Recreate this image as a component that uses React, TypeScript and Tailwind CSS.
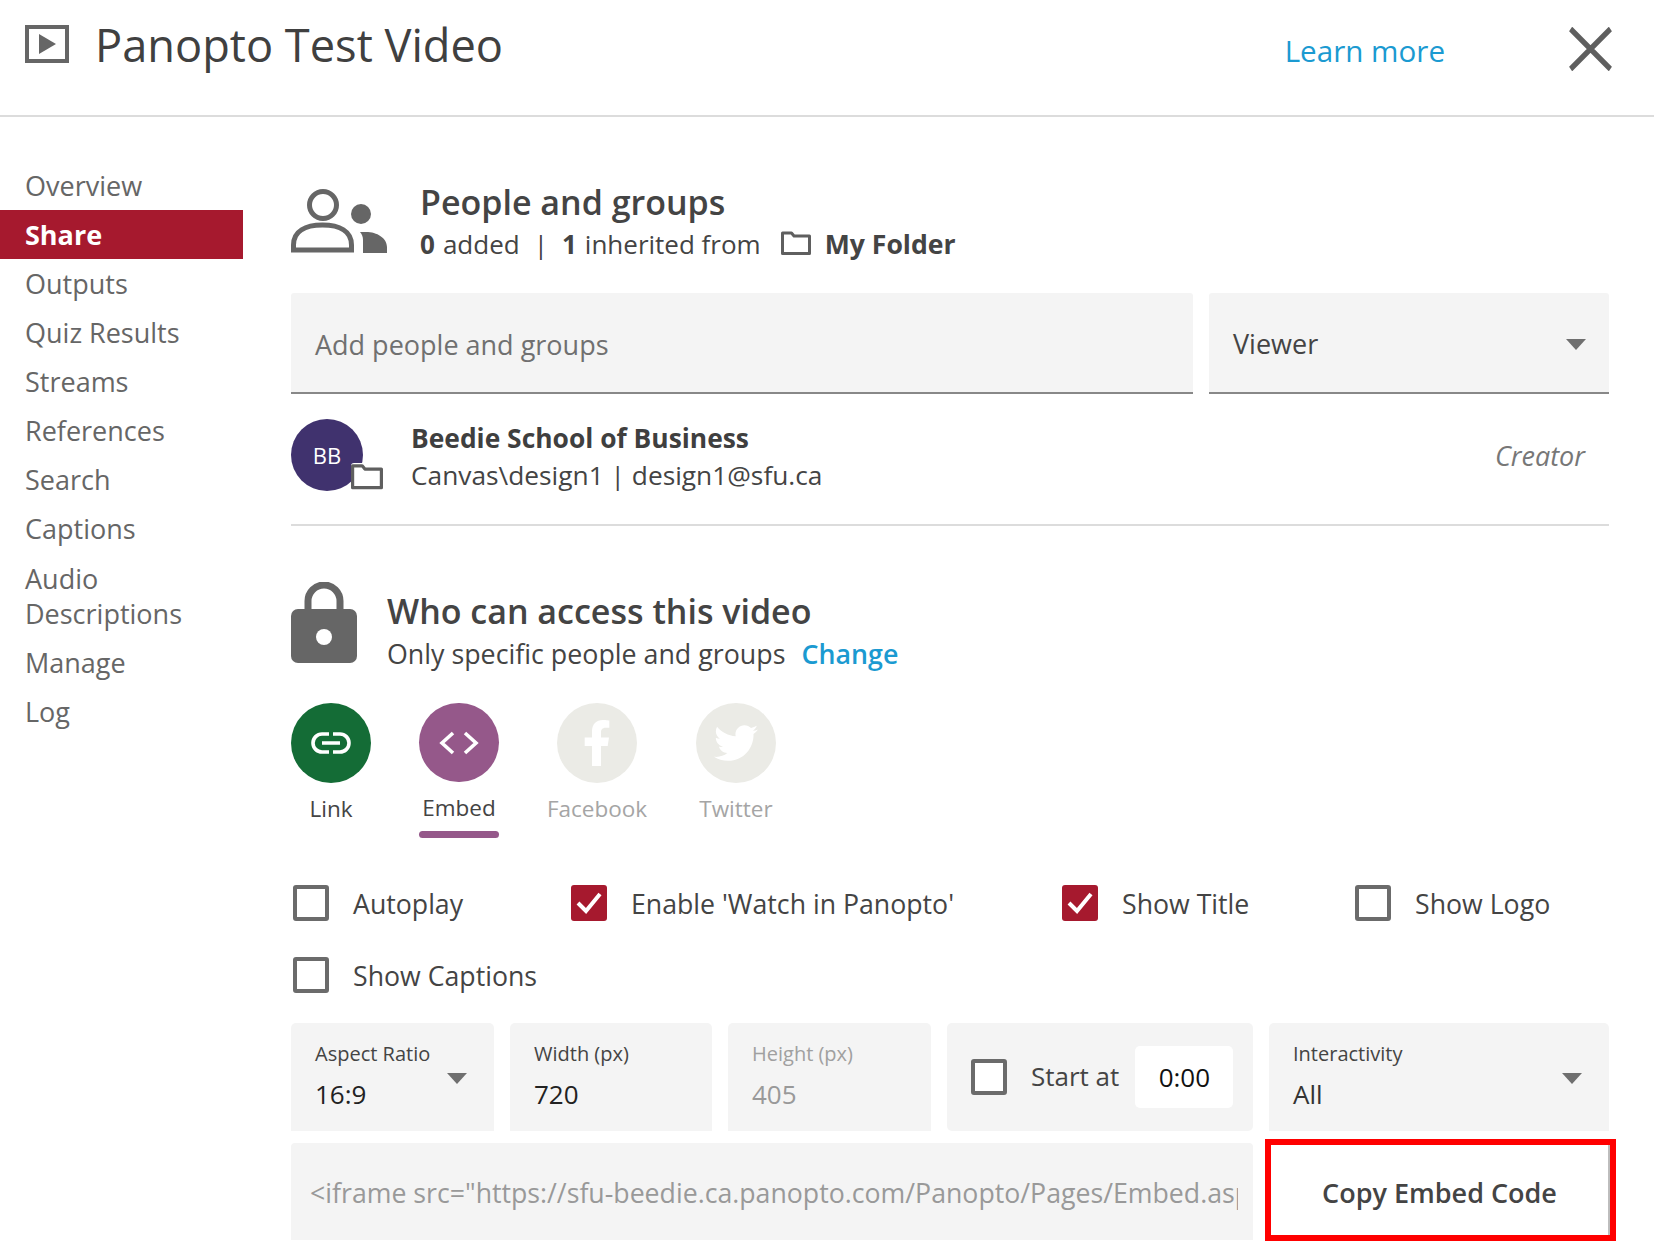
import React from 'react'
import { FaFacebookF, FaTwitter } from 'react-icons/fa'

const navItems = ['Overview', 'Share', 'Outputs', 'Quiz Results', 'Streams', 'References', 'Search', 'Captions']

function FolderIcon({ className }: { className?: string }) {
  return (
    <svg viewBox="0 0 30 24" className={className} fill="none" stroke="#5f5f5f" strokeWidth="3" strokeLinejoin="round">
      <path d="M1.5 22.5V2h9l2.5 3h15.5v17.5z" />
    </svg>
  )
}

function Caret({ className }: { className?: string }) {
  return <div className={`w-0 h-0 border-l-[10px] border-r-[10px] border-t-[11px] border-l-transparent border-r-transparent border-t-[#6f6f6f] ${className ?? ''}`} />
}

function Check({ checked }: { checked?: boolean }) {
  if (checked) {
    return (
      <div className="w-9 h-9 rounded-[3px] bg-[#a6192e] flex items-center justify-center shrink-0">
        <svg viewBox="0 0 36 36" className="w-9 h-9" fill="none" stroke="#fff" strokeWidth="4">
          <path d="M7 18l8 8L29 9" />
        </svg>
      </div>
    )
  }
  return <div className="w-9 h-9 rounded-[3px] border-[4px] border-[#6b6b6b] bg-white shrink-0" />
}

function ShareButton({ label, bg, disabled, active, children, className }: { label: string; bg: string; disabled?: boolean; active?: boolean; children: React.ReactNode; className?: string }) {
  return (
    <div className={`w-[80px] flex flex-col items-center shrink-0 ${className ?? ''}`}>
      <div className={`w-[80px] h-[80px] rounded-full flex items-center justify-center ${bg}`}>{children}</div>
      <div className={`mt-[10px] h-[32px] leading-[32px] text-[22.5px] whitespace-nowrap ${disabled ? 'text-[#a5a5a5]' : 'text-[#444]'}`}>{label}</div>
      {active && <div className="mt-[7px] w-[80px] h-[7px] rounded-full bg-[#95588a]" />}
    </div>
  )
}

function CheckOption({ label, checked, className }: { label: string; checked?: boolean; className?: string }) {
  return (
    <div className={`flex items-center gap-[24px] shrink-0 ${className ?? ''}`}>
      <Check checked={checked} />
      <span className="pt-[2px] text-[26.7px] text-[#444] whitespace-nowrap">{label}</span>
    </div>
  )
}

export default function App() {
  return (
    <div className="w-[1654px] h-[1246px] bg-white overflow-hidden text-[#3f3f3f]" style={{ fontFamily: '"Open Sans", "Noto Sans", sans-serif' }}>
      {/* header */}
      <div className="h-[117px] border-b-2 border-[#dcdcdc] flex items-start pl-[25px] pr-[42px]">
        <div className="mt-[25px] w-[44px] h-[38px] border-[4px] border-[#666] flex items-center justify-center shrink-0">
          <div className="w-0 h-0 border-t-[10px] border-b-[10px] border-l-[17px] border-t-transparent border-b-transparent border-l-[#666]" />
        </div>
        <div className="ml-[26px] mt-[11px] text-[45.2px] leading-[68px] text-[#404040]">Panopto Test Video</div>
        <div className="ml-auto mt-[31px] text-[29.6px] leading-[40px] text-[#1b9ad1]">Learn more</div>
        <svg viewBox="0 0 53 44" className="ml-[124px] mt-[27px] w-[43px] h-[44px]" fill="none" stroke="#5f5f5f" strokeWidth="6" preserveAspectRatio="none">
          <path d="M2 2l49 40M51 2L2 42" />
        </svg>
      </div>

      <div className="flex">
        {/* sidebar */}
        <div className="w-[243px] pt-[44px] shrink-0 text-[27px] text-[#666]">
          {navItems.map((item) => (
            <div key={item} className={`h-[49px] leading-[49px] pl-[25px] ${item === 'Share' ? 'bg-[#a6192e] text-white font-bold' : ''}`}>{item}</div>
          ))}
          <div className="pl-[25px] leading-[35px] pt-[8px] pb-[7px]">Audio<br />Descriptions</div>
          <div className="h-[49px] leading-[49px] pl-[25px]">Manage</div>
          <div className="h-[49px] leading-[49px] pl-[25px]">Log</div>
        </div>

        {/* main */}
        <div className="ml-[48px] w-[1318px] pt-[66px]">
          <div className="h-[80px] flex">
            <svg viewBox="0 0 96 65" className="w-[96px] h-[65px] mt-[5px] shrink-0">
              <circle cx="32" cy="17" r="13.5" fill="none" stroke="#666" strokeWidth="5" />
              <path d="M2.5 62V57c0-14 12-20 29-20s29 6 29 20v5z" fill="none" stroke="#666" strokeWidth="5" />
              <circle cx="70" cy="26" r="10" fill="#666" />
              <path d="M69 44h6c11 0 21 6 21 15v6H72V52c0-3-1-6-3-8z" fill="#666" />
            </svg>
            <div className="ml-[33px]">
              <div className="h-[40px] leading-[38px] text-[34px] font-semibold text-[#444]">People and groups</div>
              <div className="mt-[1px] h-[40px] leading-[40px] text-[26px] flex items-center whitespace-nowrap text-[#444]">
                <b className="font-bold">0</b>
                <span className="ml-[8px]">added</span>
                <span className="ml-[14px]">|</span>
                <b className="ml-[14px] font-bold">1</b>
                <span className="ml-[8px]">inherited from</span>
                <FolderIcon className="ml-[20px] w-[30px] h-[24px] -mt-[3px]" />
                <b className="ml-[14px] text-[26.6px] font-bold">My Folder</b>
              </div>
            </div>
          </div>

          <div className="mt-[30px] h-[101px] flex gap-4">
            <div className="w-[902px] bg-[#f4f4f4] border-b-2 border-[#888] rounded-t-[3px] flex items-center pl-6 pt-[6px] text-[27px] text-[#707070]">Add people and groups</div>
            <div className="w-[400px] bg-[#f4f4f4] border-b-2 border-[#888] rounded-t-[3px] flex items-center justify-between pl-6 pr-[23px] pt-[4px] text-[27px] text-[#444]">
              Viewer
              <Caret />
            </div>
          </div>

          <div className="mt-[25px] h-[72px] flex items-center">
            <div className="relative w-[72px] h-[72px] rounded-full bg-[#40326e] text-white flex items-center justify-center text-[22px] shrink-0">
              BB
              <div className="absolute left-[60px] top-[44px] w-[32px] h-[27px] bg-white rounded-[3px]">
                <FolderIcon className="w-[32px] h-[27px]" />
              </div>
            </div>
            <div className="ml-[48px] pt-[4px]">
              <div className="h-[36px] leading-[36px] text-[26.4px] font-bold text-[#3f3f3f]">Beedie School of Business</div>
              <div className="h-[38px] leading-[38px] text-[26.3px] text-[#444]">Canvas\design1 | design1@sfu.ca</div>
            </div>
            <div className="ml-auto mr-6 pt-[3px] text-[27px] italic text-[#777]">Creator</div>
          </div>

          <div className="mt-[33px] h-[2px] bg-[#dcdcdc]" />

          <div className="mt-[56px] h-[81px] flex">
            <svg viewBox="0 0 66 81" className="w-[66px] h-[81px] shrink-0">
              <path d="M17 30V19a16 16 0 0132 0v11" fill="none" stroke="#666" strokeWidth="7" />
              <rect x="0" y="27" width="66" height="54" rx="7" fill="#666" />
              <circle cx="33" cy="55" r="8" fill="#fff" />
            </svg>
            <div className="ml-[30px]">
              <div className="h-[44px] mt-[7px] leading-[44px] text-[34px] font-semibold text-[#444]">Who can access this video</div>
              <div className="h-[40px] pt-[1px] leading-[40px] text-[26.8px] text-[#444] whitespace-nowrap">
                Only specific people and groups<span className="ml-[16px] font-semibold text-[#1b9ad1]">Change</span>
              </div>
            </div>
          </div>

          <div className="mt-[40px] h-[135px] flex">
            <ShareButton label="Link" bg="bg-[#146c36]">
              <svg viewBox="0 0 40 22" className="w-[40px] h-[22px]" fill="none" stroke="#fff" strokeWidth="3.6">
                <path d="M18 2H11a9 9 0 000 18h7M22 2h7a9 9 0 010 18h-7M11 11h18" />
              </svg>
            </ShareButton>
            <ShareButton label="Embed" bg="bg-[#95588a]" active className="ml-[48px]">
              <svg viewBox="0 0 40 24" className="w-[40px] h-[24px]" fill="none" stroke="#fff" strokeWidth="3.6">
                <path d="M14 2L3 12l11 10M26 2l11 10-11 10" />
              </svg>
            </ShareButton>
            <ShareButton label="Facebook" bg="bg-[#ebebe6]" disabled className="ml-[58px]">
              <FaFacebookF className="text-white text-[46px]" />
            </ShareButton>
            <ShareButton label="Twitter" bg="bg-[#ebebe6]" disabled className="ml-[59px]">
              <FaTwitter className="text-white text-[44px]" />
            </ShareButton>
          </div>

          <div className="mt-[47px] h-[36px] flex">
            <CheckOption label="Autoplay" className="ml-[2px] w-[278px]" />
            <CheckOption label="Enable 'Watch in Panopto'" checked className="w-[491px]" />
            <CheckOption label="Show Title" checked className="w-[293px]" />
            <CheckOption label="Show Logo" />
          </div>
          <div className="mt-[36px] h-[36px] flex">
            <CheckOption label="Show Captions" className="ml-[2px]" />
          </div>

          <div className="mt-[30px] h-[108px] flex gap-4">
            <div className="relative w-[203px] bg-[#f4f4f4] rounded-t-[5px] pl-6 pt-[16px] shrink-0">
              <div className="h-[30px] leading-[30px] text-[20px] text-[#444]">Aspect Ratio</div>
              <div className="mt-[7px] leading-[36px] text-[26px] text-[#222]">16:9</div>
              <Caret className="absolute right-[27px] top-[50px]" />
            </div>
            <div className="w-[202px] bg-[#f4f4f4] rounded-t-[5px] pl-6 pt-[16px] shrink-0">
              <div className="h-[30px] leading-[30px] text-[20px] text-[#444]">Width (px)</div>
              <div className="mt-[7px] leading-[36px] text-[26px] text-[#222]">720</div>
            </div>
            <div className="w-[203px] bg-[#f4f4f4] rounded-t-[5px] pl-6 pt-[16px] shrink-0">
              <div className="h-[30px] leading-[30px] text-[20px] text-[#a0a0a0]">Height (px)</div>
              <div className="mt-[7px] leading-[36px] text-[26px] text-[#999]">405</div>
            </div>
            <div className="w-[306px] bg-[#f4f4f4] rounded-[5px] flex items-center pl-6 shrink-0">
              <Check />
              <span className="ml-[24px] text-[26px] text-[#444] whitespace-nowrap -mt-[2px]">Start at</span>
              <div className="ml-[16px] w-[98px] h-[62px] bg-white rounded-[5px] flex items-center justify-center text-[26px] text-[#111]">0:00</div>
            </div>
            <div className="relative w-[340px] bg-[#f4f4f4] rounded-t-[5px] pl-6 pt-[16px] shrink-0">
              <div className="h-[30px] leading-[30px] text-[20px] text-[#444]">Interactivity</div>
              <div className="mt-[7px] leading-[36px] text-[26px] text-[#333]">All</div>
              <Caret className="absolute right-[27px] top-[50px]" />
            </div>
          </div>

          <div className="mt-[12px] h-[97px] flex">
            <div className="w-[962px] bg-[#f4f4f4] rounded-t-[4px] flex items-center pl-[19px] pr-[15px] pt-[3px] shrink-0">
              <div className="overflow-hidden whitespace-nowrap text-[26.7px] text-[#999]">&lt;iframe src="https://sfu-beedie.ca.panopto.com/Panopto/Pages/Embed.aspx?id=0</div>
            </div>
            <div className="ml-[12px] -mt-[4px] h-[102px] w-[351px] border-[6px] border-[#ff0000] shrink-0">
              <div className="h-full border-r-2 border-[#bdbdbd] flex items-center justify-center pt-[6px] text-[27px] font-semibold text-[#444] whitespace-nowrap">Copy Embed Code</div>
            </div>
          </div>
        </div>
      </div>
    </div>
  )
}
